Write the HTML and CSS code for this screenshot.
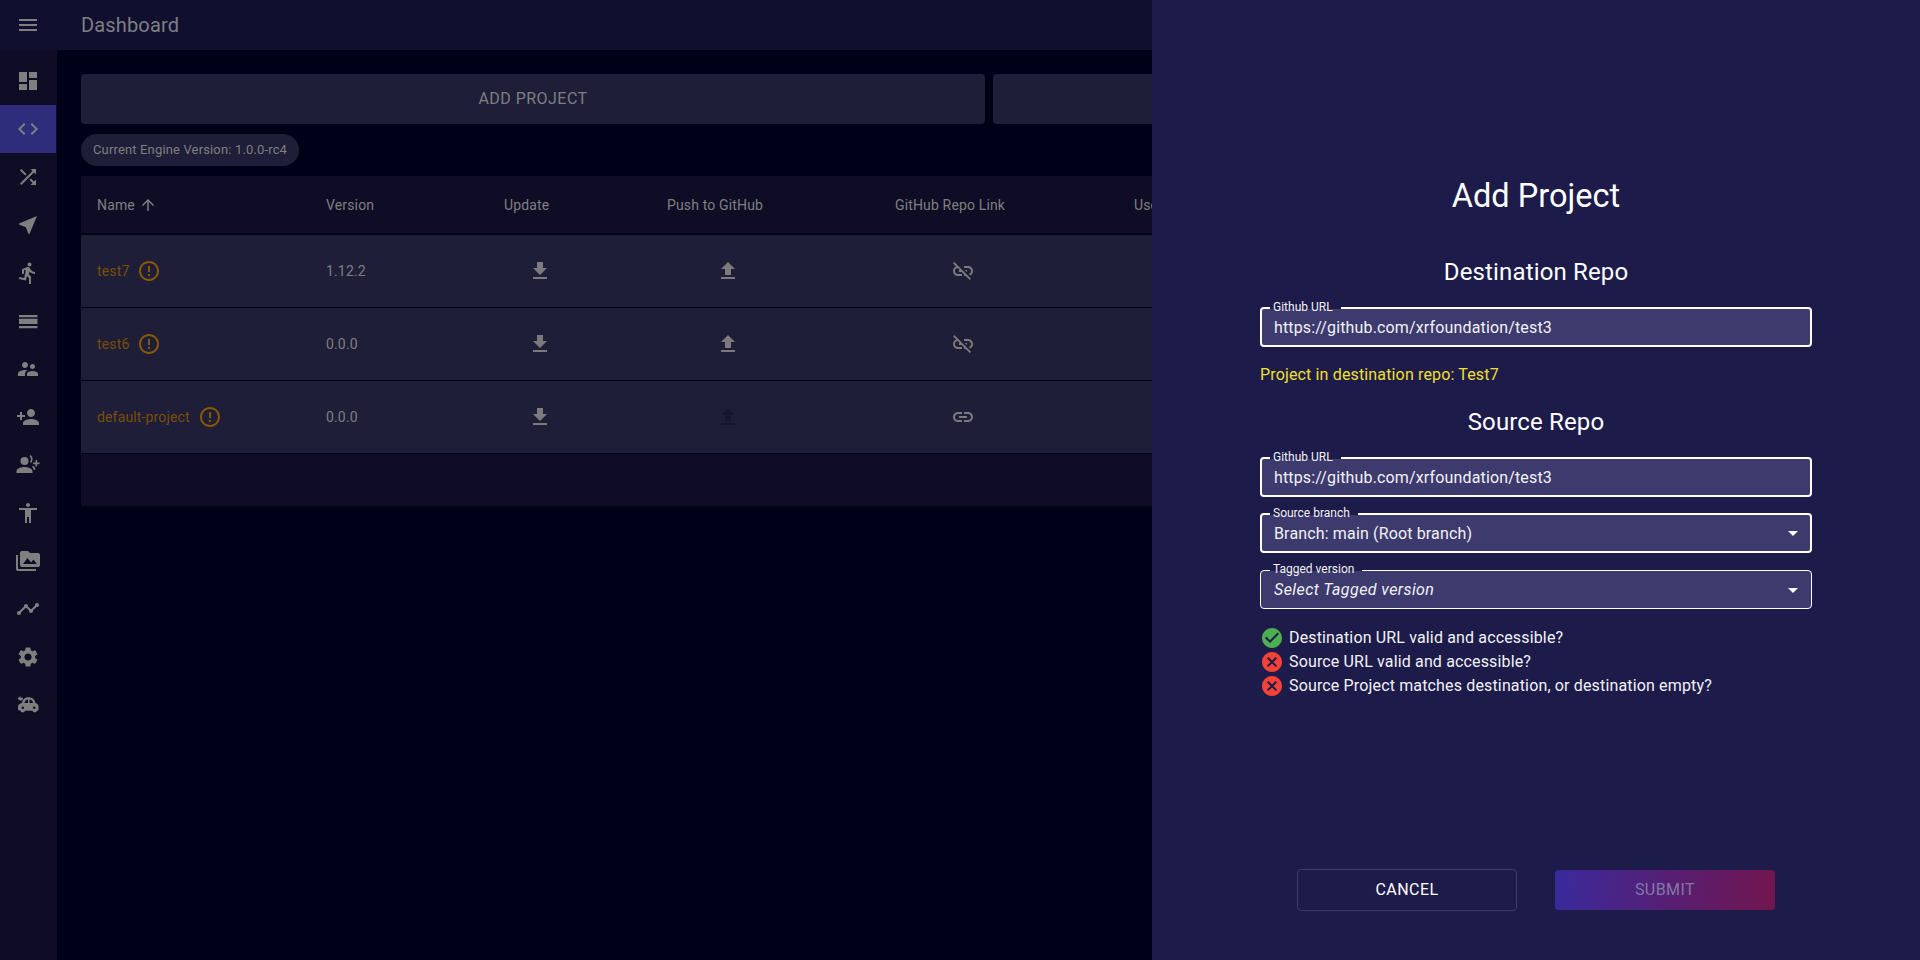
FILE: index.html
```html
<!DOCTYPE html>
<html>
<head>
    <meta charset="UTF-8">
    <title>Dashboard</title>
    <link rel="stylesheet" href="styles.css">
</head>
<body>
    <svg class="sprite" xmlns="http://www.w3.org/2000/svg">
        <symbol id="i-menu" viewBox="0 0 24 24"><path d="M3 18h18v-2H3v2zm0-5h18v-2H3v2zm0-7v2h18V6H3z"/></symbol>
        <symbol id="i-dashboard" viewBox="0 0 24 24"><path d="M3 13h8V3H3v10zm0 8h8v-6H3v6zm10 0h8V11h-8v10zm0-18v6h8V3h-8z"/></symbol>
        <symbol id="i-code" viewBox="0 0 24 24"><path d="M9.4 16.6L4.8 12l4.6-4.6L8 6l-6 6 6 6 1.4-1.4zm5.2 0l4.6-4.6-4.6-4.6L16 6l6 6-6 6-1.4-1.4z"/></symbol>
        <symbol id="i-shuffle" viewBox="0 0 24 24"><path d="M10.59 9.17L5.41 4 4 5.41l5.17 5.17 1.42-1.41zM14.5 4l2.04 2.04L4 18.59 5.41 20 17.96 7.46 20 9.5V4h-5.5zm.33 9.41l-1.41 1.41 3.13 3.13L14.5 20H20v-5.5l-2.04 2.04-3.13-3.13z"/></symbol>
        <symbol id="i-near" viewBox="0 0 24 24"><path d="M21 3L3 10.53v.98l6.84 2.65L12.48 21h.98L21 3z"/></symbol>
        <symbol id="i-run" viewBox="0 0 24 24"><path d="M13.49 5.48c1.1 0 2-.9 2-2s-.9-2-2-2-2 .9-2 2 .9 2 2 2zm-3.6 13.9l1-4.4 2.1 2v6h2v-7.5l-2.1-2 .6-3c1.3 1.5 3.3 2.5 5.5 2.5v-2c-1.9 0-3.5-1-4.3-2.4l-1-1.6c-.4-.6-1-1-1.7-1-.3 0-.5.1-.8.1l-5.2 2.2v4.7h2v-3.4l1.8-.7-1.6 8.1-4.9-1-.4 2 7 1.4z"/></symbol>
        <symbol id="i-bars" viewBox="0 0 24 24"><path d="M3 6h18.500v2.300H3zM3 9.800h18.500V15H3zM3 17h18.500v2.300H3z"/></symbol>
        <symbol id="i-supervisor" viewBox="0 0 24 24"><path d="M16.5 12c1.38 0 2.49-1.12 2.49-2.5S17.88 7 16.5 7C15.12 7 14 8.12 14 9.5s1.12 2.5 2.5 2.5zM9 11c1.66 0 2.99-1.34 2.99-3S10.66 5 9 5C7.34 5 6 6.34 6 8s1.34 3 3 3zm7.5 3c-1.83 0-5.5.92-5.5 2.75V19h11v-2.25c0-1.83-3.67-2.75-5.5-2.75zM9 13c-2.33 0-7 1.17-7 3.5V19h7v-2.25c0-.85.33-2.34 2.37-3.47C10.5 13.1 9.66 13 9 13z"/></symbol>
        <symbol id="i-person-add" viewBox="0 0 24 24"><path d="M15 12c2.21 0 4-1.79 4-4s-1.79-4-4-4-4 1.79-4 4 1.79 4 4 4zm-9-2V7H4v3H1v2h3v3h2v-3h3v-2H6zm9 4c-2.67 0-8 1.34-8 4v2h16v-2c0-2.66-5.33-4-8-4z"/></symbol>
        <symbol id="i-voice-add" viewBox="0 0 24 24"><circle cx="8.500" cy="8" r="4"/><path d="M8.500 14c-2.670 0-8 1.340-8 4v2h16v-2c0-2.660-5.330-4-8-4zM13.600 3.200l1-1.200c2.400 1.900 2.600 5.600.6 8l-1.200-1c1.400-1.700 1.300-4.400-.4-5.800zM17.600 16.200c-.3-.9-.8-1.700-1.500-2.400l1.200-1c1.200 1 2 2.400 2.300 3.800l-2 .4zM19.500 7h1.600v2.600h2.400v1.600h-2.400v2.400h-1.600v-2.400h-2.400V9.600h2.400z"/></symbol>
        <symbol id="i-accessibility" viewBox="0 0 24 24"><path d="M12 2c1.1 0 2 .9 2 2s-.9 2-2 2-2-.9-2-2 .9-2 2-2zm9 7h-6v13h-2v-6h-2v6H9V9H3V7h18v2z"/></symbol>
        <symbol id="i-media" viewBox="0 0 24 24"><path d="M2 6H0v5h.01L0 20c0 1.1.9 2 2 2h18v-2H2V6zm20-2h-8l-2-2H6c-1.1 0-1.99.9-1.99 2L4 16c0 1.1.9 2 2 2h16c1.1 0 2-.9 2-2V6c0-1.1-.9-2-2-2zM7 15l4.5-6 3.5 4.51 2.5-3.01L21 15H7z"/></symbol>
        <symbol id="i-timeline" viewBox="0 0 24 24"><path d="M23 8c0 1.1-.9 2-2 2-.18 0-.35-.02-.51-.07l-3.56 3.55c.05.16.07.34.07.52 0 1.1-.9 2-2 2s-2-.9-2-2c0-.18.02-.36.07-.52l-2.55-2.55c-.16.05-.34.07-.52.07s-.36-.02-.52-.07l-4.55 4.56c.05.16.07.33.07.51 0 1.1-.9 2-2 2s-2-.9-2-2 .9-2 2-2c.18 0 .35.02.51.07l4.56-4.55C8.02 9.36 8 9.18 8 9c0-1.1.9-2 2-2s2 .9 2 2c0 .18-.02.36-.07.52l2.55 2.55c.16-.05.34-.07.52-.07s.36.02.52.07l3.55-3.56C19.02 8.35 19 8.18 19 8c0-1.1.9-2 2-2s2 .9 2 2z"/></symbol>
        <symbol id="i-settings" viewBox="0 0 24 24"><path d="M19.14 12.94c.04-.3.06-.61.06-.94 0-.32-.02-.64-.07-.94l2.03-1.58c.18-.14.23-.41.12-.61l-1.92-3.32c-.12-.22-.37-.29-.59-.22l-2.39.96c-.5-.38-1.03-.7-1.62-.94l-.36-2.54c-.04-.24-.24-.41-.48-.41h-3.84c-.24 0-.43.17-.47.41l-.36 2.54c-.59.24-1.13.57-1.62.94l-2.39-.96c-.22-.08-.47 0-.59.22L2.74 8.87c-.12.21-.08.47.12.61l2.03 1.58c-.05.3-.09.63-.09.94s.02.64.07.94l-2.03 1.58c-.18.14-.23.41-.12.61l1.92 3.32c.12.22.37.29.59.22l2.39-.96c.5.38 1.03.7 1.62.94l.36 2.54c.05.24.24.41.48.41h3.84c.24 0 .44-.17.47-.41l.36-2.54c.59-.24 1.13-.56 1.62-.94l2.39.96c.22.08.47 0 .59-.22l1.92-3.32c.12-.22.07-.47-.12-.61l-2.01-1.58zM12 15.6c-1.98 0-3.6-1.62-3.6-3.6s1.62-3.6 3.6-3.6 3.6 1.62 3.6 3.6-1.62 3.6-3.6 3.6z"/></symbol>
        <symbol id="i-car" viewBox="0 0 24 24"><path fill-rule="evenodd" d="M6 10C6.500 6.500 9 4.300 12 4.300h1.500C16.500 4.300 18.500 6.500 19.500 10 21.500 10.500 22.500 12 22.500 14v2c0 1-.5 1.500-1.500 1.700a2.300 2.300 0 0 1-4.500 0H9a2.300 2.300 0 0 1-4.500 0C3 17.500 2 17 2 16v-2c0-2 1.500-3.500 4-4zM8.500 10H12V6.500c-2 0-3 1.500-3.500 3.500zM13.500 10H17c-.5-2-1.500-3.500-3.500-3.500zM6.800 13.500a1.300 1.300 0 1 0 0 2.600 1.300 1.300 0 0 0 0-2.600zM18.200 13.500a1.300 1.300 0 1 0 0 2.600 1.300 1.300 0 0 0 0-2.600z"/><path d="M1.500 5.500L4.500 3v1.700h2.300v1.700L4.500 8.300V7H3.300z"/></symbol>
        <symbol id="i-download" viewBox="0 0 24 24"><path d="M19 9h-4V3H9v6H5l7 7 7-7zM5 18v2h14v-2H5z"/></symbol>
        <symbol id="i-upload" viewBox="0 0 24 24"><path d="M9 16h6v-6h4l-7-7-7 7h4zm-4 2h14v2H5z"/></symbol>
        <symbol id="i-link" viewBox="0 0 24 24"><path d="M3.900 12c0-1.710 1.390-3.100 3.100-3.100h4V7H7c-2.760 0-5 2.240-5 5s2.240 5 5 5h4v-1.900H7c-1.710 0-3.100-1.390-3.100-3.100zM8 13h8v-2H8v2zm9-6h-4v1.900h4c1.710 0 3.100 1.390 3.100 3.100s-1.390 3.100-3.100 3.100h-4V17h4c2.760 0 5-2.240 5-5s-2.240-5-5-5z"/></symbol>
        <symbol id="i-link-off" viewBox="0 0 24 24"><path d="M17 7h-4v1.900h4c1.710 0 3.100 1.390 3.100 3.100 0 1.430-.98 2.630-2.310 2.980l1.460 1.460C20.880 15.610 22 13.950 22 12c0-2.760-2.240-5-5-5zm-1 4h-2.190l2 2H16zM2 4.270l3.110 3.110C3.290 8.120 2 9.910 2 12c0 2.760 2.240 5 5 5h4v-1.900H7c-1.710 0-3.100-1.390-3.100-3.100 0-1.590 1.210-2.900 2.760-3.070L8.730 11H8v2h2.730L13 15.270V17h1.730l4.010 4L20 19.740 3.270 3 2 4.270z"/></symbol>
        <symbol id="i-error" viewBox="0 0 24 24"><path d="M11 15h2v2h-2zm0-8h2v6h-2zm.99-5C6.470 2 2 6.480 2 12s4.470 10 9.990 10C17.520 22 22 17.520 22 12S17.520 2 11.990 2zM12 20c-4.420 0-8-3.580-8-8s3.580-8 8-8 8 3.580 8 8-3.580 8-8 8z"/></symbol>
        <symbol id="i-arrow-up" viewBox="0 0 24 24"><path d="M4 12l1.410 1.410L11 7.830V20h2V7.830l5.580 5.590L20 12l-8-8-8 8z"/></symbol>
        <symbol id="i-check" viewBox="0 0 24 24"><path d="M12 2C6.480 2 2 6.480 2 12s4.480 10 10 10 10-4.480 10-10S17.520 2 12 2zm-2 15l-5-5 1.410-1.410L10 14.170l7.590-7.590L19 8l-9 9z"/></symbol>
        <symbol id="i-cancel" viewBox="0 0 24 24"><path d="M12 2C6.470 2 2 6.470 2 12s4.470 10 10 10 10-4.470 10-10S17.530 2 12 2zm5 13.590L15.590 17 12 13.410 8.410 17 7 15.590 10.590 12 7 8.410 8.410 7 12 10.590 15.590 7 17 8.410 13.410 12 17 15.590z"/></symbol>
        <symbol id="i-caret" viewBox="0 0 24 24"><path d="M7 10l5 5 5-5z"/></symbol>
    </svg>

    <header class="topbar">
        <svg class="icon menu-icon"><use href="#i-menu"/></svg>
        <span class="topbar-title">Dashboard</span>
    </header>

    <div class="layout">
        <nav class="sidebar">
            <a class="nav-item"><svg class="icon"><use href="#i-dashboard"/></svg></a>
            <a class="nav-item active"><svg class="icon"><use href="#i-code"/></svg></a>
            <a class="nav-item"><svg class="icon"><use href="#i-shuffle"/></svg></a>
            <a class="nav-item"><svg class="icon"><use href="#i-near"/></svg></a>
            <a class="nav-item"><svg class="icon"><use href="#i-run"/></svg></a>
            <a class="nav-item"><svg class="icon"><use href="#i-bars"/></svg></a>
            <a class="nav-item"><svg class="icon"><use href="#i-supervisor"/></svg></a>
            <a class="nav-item"><svg class="icon"><use href="#i-person-add"/></svg></a>
            <a class="nav-item"><svg class="icon"><use href="#i-voice-add"/></svg></a>
            <a class="nav-item"><svg class="icon"><use href="#i-accessibility"/></svg></a>
            <a class="nav-item"><svg class="icon"><use href="#i-media"/></svg></a>
            <a class="nav-item"><svg class="icon"><use href="#i-timeline"/></svg></a>
            <a class="nav-item"><svg class="icon"><use href="#i-settings"/></svg></a>
            <a class="nav-item"><svg class="icon"><use href="#i-car"/></svg></a>
        </nav>

        <main class="content">
            <div class="action-row">
                <button class="action-btn">Add Project</button>
                <button class="action-btn"></button>
            </div>
            <div class="chip">Current Engine Version: 1.0.0-rc4</div>

            <table class="project-table">
                <colgroup>
                    <col class="col-name"><col class="col-version"><col class="col-update"><col class="col-push"><col class="col-link"><col>
                </colgroup>
                <thead>
                    <tr>
                        <th>Name <svg class="sort-icon"><use href="#i-arrow-up"/></svg></th>
                        <th>Version</th>
                        <th>Update</th>
                        <th>Push to GitHub</th>
                        <th>GitHub Repo Link</th>
                        <th>User</th>
                    </tr>
                </thead>
                <tbody>
                    <tr>
                        <td><span class="project-name">test7 <svg class="warn-icon"><use href="#i-error"/></svg></span></td>
                        <td>1.12.2</td>
                        <td><svg class="icon update-icon"><use href="#i-download"/></svg></td>
                        <td><svg class="icon push-icon"><use href="#i-upload"/></svg></td>
                        <td><svg class="icon repo-icon"><use href="#i-link-off"/></svg></td>
                        <td></td>
                    </tr>
                    <tr>
                        <td><span class="project-name">test6 <svg class="warn-icon"><use href="#i-error"/></svg></span></td>
                        <td>0.0.0</td>
                        <td><svg class="icon update-icon"><use href="#i-download"/></svg></td>
                        <td><svg class="icon push-icon"><use href="#i-upload"/></svg></td>
                        <td><svg class="icon repo-icon"><use href="#i-link-off"/></svg></td>
                        <td></td>
                    </tr>
                    <tr>
                        <td><span class="project-name">default-project <svg class="warn-icon"><use href="#i-error"/></svg></span></td>
                        <td>0.0.0</td>
                        <td><svg class="icon update-icon"><use href="#i-download"/></svg></td>
                        <td><svg class="icon push-icon disabled"><use href="#i-upload"/></svg></td>
                        <td><svg class="icon repo-icon"><use href="#i-link"/></svg></td>
                        <td></td>
                    </tr>
                </tbody>
            </table>
            <div class="table-footer"></div>
        </main>
    </div>

    <aside class="drawer">
        <h1 class="drawer-title">Add Project</h1>

        <h2 class="section-title">Destination Repo</h2>
        <div class="field strong">
            <span class="field-label">Github URL</span>
            <span class="field-value">https://github.com/xrfoundation/test3</span>
        </div>
        <p class="repo-note">Project in destination repo: Test7</p>

        <h2 class="section-title source-title">Source Repo</h2>
        <div class="field strong">
            <span class="field-label">Github URL</span>
            <span class="field-value">https://github.com/xrfoundation/test3</span>
        </div>
        <div class="field strong branch-field">
            <span class="field-label">Source branch</span>
            <span class="field-value">Branch: main (Root branch)</span>
            <svg class="icon caret"><use href="#i-caret"/></svg>
        </div>
        <div class="field tag-field">
            <span class="field-label">Tagged version</span>
            <span class="field-value placeholder">Select Tagged version</span>
            <svg class="icon caret"><use href="#i-caret"/></svg>
        </div>

        <ul class="checks">
            <li><svg class="icon ok"><use href="#i-check"/></svg>Destination URL valid and accessible?</li>
            <li><svg class="icon bad"><use href="#i-cancel"/></svg>Source URL valid and accessible?</li>
            <li><svg class="icon bad"><use href="#i-cancel"/></svg>Source Project matches destination, or destination empty?</li>
        </ul>

        <div class="drawer-actions">
            <button class="btn-cancel">Cancel</button>
            <button class="btn-submit" disabled>Submit</button>
        </div>
    </aside>
</body>
</html>
```

FILE: styles.css
```css
* {
    box-sizing: border-box;
}
html, body {
    height: 100%;
}
body {
    margin: 0;
    background: #000018;
    color: #7f7f80;
    font-family: Roboto, "Liberation Sans", sans-serif;
    letter-spacing: 0.15px;
    overflow: hidden;
}
.sprite {
    display: none;
}
.icon {
    width: 24px;
    height: 24px;
    fill: currentColor;
    flex: none;
}

/* top bar */
.topbar {
    height: 50px;
    display: flex;
    align-items: center;
    background: #100f2f;
}
.menu-icon {
    margin: 0 41px 0 16px;
}
.topbar-title {
    font-size: 20px;
}

/* side nav */
.layout {
    display: flex;
    height: 910px;
}
.sidebar {
    width: 57px;
    flex: none;
    padding-top: 7px;
    background: #0f0d26;
}
.nav-item {
    width: 56px;
    height: 48px;
    display: flex;
    align-items: center;
    justify-content: center;
    color: #7f7f80;
}
.nav-item.active {
    background: #2e2d7c;
}

/* main content */
.content {
    flex: 1;
    min-width: 0;
    padding: 24px 23px 0 24px;
}
.action-row {
    display: flex;
    gap: 8px;
}
.action-btn {
    flex: 1;
    height: 50px;
    padding-bottom: 2px;
    border: none;
    border-radius: 4px;
    background: #1e1e38;
    color: #7f7f80;
    font: 400 16px Roboto, sans-serif;
    letter-spacing: 0.46px;
    text-transform: uppercase;
}
.chip {
    width: 218px;
    height: 32px;
    margin: 10px 0;
    padding: 0 12px;
    border-radius: 16px;
    background: #1e1e38;
    color: #7f7f80;
    font-size: 13px;
    line-height: 32px;
    white-space: nowrap;
}
.project-table {
    width: 100%;
    table-layout: fixed;
    border-collapse: collapse;
    font-size: 14px;
}
.col-name { width: 229px; }
.col-version { width: 178px; }
.col-update { width: 163px; }
.col-push { width: 228px; }
.col-link { width: 239px; }
.project-table th {
    height: 58px;
    padding: 0 16px;
    background: #0f0d26;
    border-bottom: 2px solid #000018;
    font-weight: 400;
    text-align: left;
    white-space: nowrap;
}
.project-table td {
    height: 73px;
    padding: 0 16px;
    background: #1e1e38;
    border-bottom: 1px solid #000018;
}
.sort-icon {
    width: 18px;
    height: 18px;
    fill: currentColor;
    vertical-align: -4px;
}
.project-name {
    display: inline-flex;
    align-items: center;
    gap: 8px;
    color: #7a4d05;
}
.warn-icon {
    width: 24px;
    height: 24px;
    fill: #8a5800;
}
.project-table td .icon {
    display: block;
    color: #7b7b7c;
}
.project-table td .update-icon { margin-left: 24px; }
.project-table td .push-icon { margin-left: 49px; }
.project-table td .push-icon.disabled { color: #16162e; }
.project-table td .repo-icon { margin-left: 56px; }
.table-footer {
    height: 52px;
    background: #0f0d26;
}

/* add project drawer */
.drawer {
    position: fixed;
    top: 0;
    right: 0;
    bottom: 0;
    width: 768px;
    display: flex;
    flex-direction: column;
    padding: 0 108px 49px;
    background: #1d1b4a;
    color: #fff;
}
.drawer-title {
    margin: 175px 0 0;
    font-size: 32.5px;
    line-height: 42px;
    font-weight: 400;
    letter-spacing: 0;
    text-align: center;
}
.section-title {
    margin: 41px 0 21px;
    font-size: 24px;
    line-height: 28px;
    font-weight: 400;
    text-align: center;
}
.source-title {
    margin-top: 0;
    margin-bottom: 21px;
}
.field {
    position: relative;
    height: 40px;
    margin-bottom: 16px;
    padding: 0 13px;
    display: flex;
    align-items: center;
    justify-content: space-between;
    background: #3d3b6e;
    border: 1px solid #fff;
    border-radius: 4px;
}
.field.strong {
    border-width: 2px;
    padding: 0 12px;
}
.branch-field {
    margin-bottom: 17px;
}
.tag-field {
    height: 39px;
    margin-bottom: 17px;
}
.field-label {
    position: absolute;
    top: -9px;
    left: 9px;
    padding-left: 3px;
    background: linear-gradient(#1d1b4a 9px, transparent 9px);
    font-size: 12px;
    line-height: 14px;
    letter-spacing: 0;
    color: #f2f2f5;
}
.field.strong .field-label {
    left: 8px;
}
.field-label::after {
    content: "";
    display: inline-block;
    width: 8px;
}
.field-value {
    font-size: 16px;
    color: #f2f2f5;
}
.field-value.placeholder {
    font-style: italic;
    letter-spacing: 0.42px;
}
.caret {
    margin-right: -7px;
}
.repo-note {
    margin: 0 0 21px;
    font-size: 16px;
    line-height: 24px;
    color: #f1e02b;
}
.checks {
    margin: 0;
    padding: 0;
    list-style: none;
    font-size: 16px;
    line-height: 24px;
    color: #f2f2f5;
}
.checks li {
    display: flex;
    align-items: center;
    gap: 5px;
}
.ok {
    color: #4caf50;
}
.bad {
    color: #f44336;
}
.drawer-actions {
    margin-top: auto;
    display: flex;
    justify-content: center;
    gap: 38px;
}
.drawer-actions button {
    width: 220px;
    height: 42px;
    padding-bottom: 2px;
    border-radius: 4px;
    font: 400 16px Roboto, sans-serif;
    letter-spacing: 0.46px;
    text-transform: uppercase;
}
.btn-cancel {
    background: transparent;
    border: 1px solid #3d3b6e;
    color: #fff;
}
.drawer-actions .btn-submit {
    height: 40px;
    margin-top: 1px;
    border: none;
    background: linear-gradient(92deg, #392a9c, #72154e);
    color: #8278a8;
}
```
